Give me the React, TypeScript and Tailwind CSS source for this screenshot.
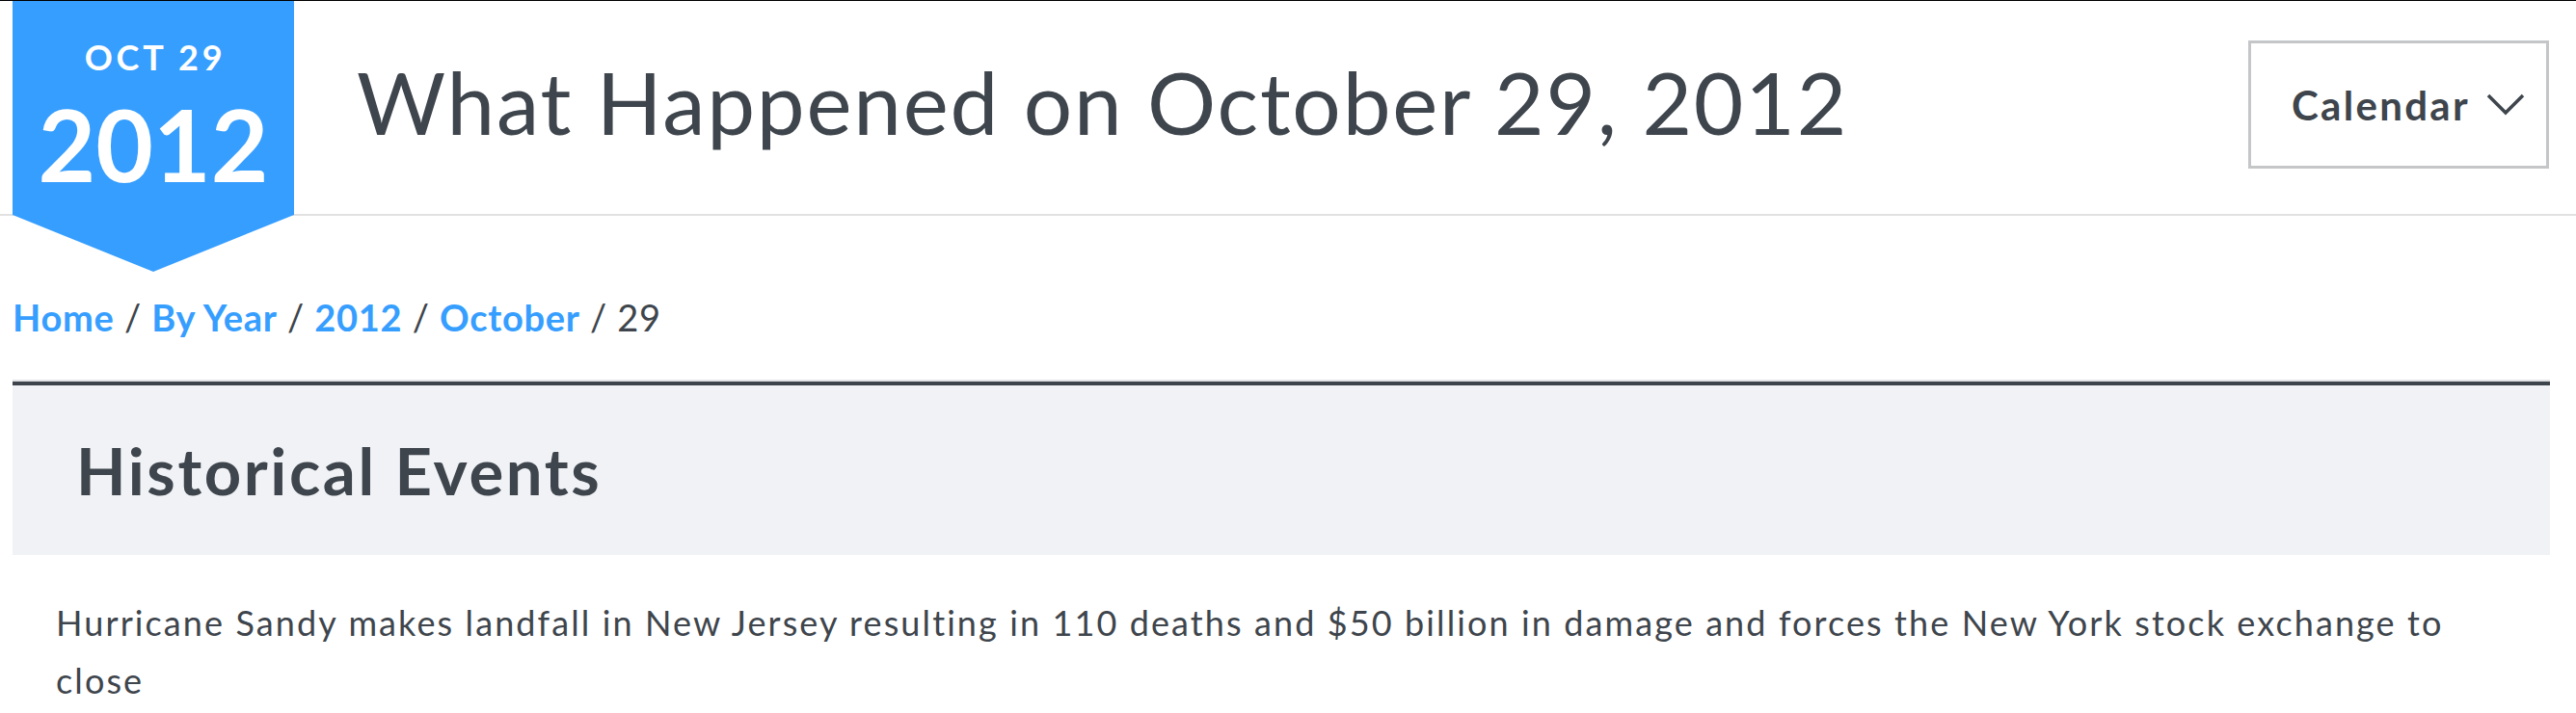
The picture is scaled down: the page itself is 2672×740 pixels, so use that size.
import React from "react";

const crumbs = [
  { label: "Home", href: "#" },
  { label: "By Year", href: "#" },
  { label: "2012", href: "#" },
  { label: "October", href: "#" },
];

const events = [
  "Hurricane Sandy makes landfall in New Jersey resulting in 110 deaths and $50 billion in damage and forces the New York stock exchange to close",
];

const DateBanner = () => (
  <div className="relative z-10 h-[281px] w-[292px] shrink-0 self-start bg-[#369eff] [clip-path:polygon(0_0,100%_0,100%_222px,50%_100%,0_222px)]">
    <div className="flex flex-col items-center pt-[40px] text-white">
      <span className="pl-[4px] text-[36px] font-bold leading-none tracking-[3.8px]">OCT 29</span>
      <span className="mt-[21px] text-[103px] font-bold leading-none">2012</span>
    </div>
  </div>
);

const CalendarButton = () => (
  <button className="mt-[41px] flex h-[133px] w-[312px] shrink-0 items-center self-start border-[3px] border-[#c5c6c8] bg-white pl-[42px] pr-[22px]">
    <span className="text-[42px] font-bold leading-none tracking-[2.3px] text-[#3e454c]">Calendar</span>
    <svg className="ml-auto" width="40" height="24" viewBox="0 0 40 24" fill="none">
      <polyline points="2,2 20,20 38,2" stroke="#3e454c" strokeWidth="3.5" />
    </svg>
  </button>
);

export default function App() {
  return (
    <div className="h-[740px] w-[2672px] overflow-hidden bg-white font-['Lato',sans-serif] text-[#3e454c]">
      <div className="h-px bg-black" />

      {/* шапка */}
      <header className="flex h-[223px] border-b-2 border-[#e1e1e1] pl-[13px] pr-[28px]">
        <DateBanner />
        <h1 className="ml-[65px] mt-[60px] self-start text-[89px] font-normal leading-none tracking-[1.8px]">
          What Happened on October 29, 2012
        </h1>
        <div className="flex-1" />
        <CalendarButton />
      </header>

      <div className="px-[13px] pr-[27px]">
        {/* хлебные крошки */}
        <nav className="mt-[86px] text-[38px] leading-none tracking-[0.7px]">
          {crumbs.map((c) => (
            <React.Fragment key={c.label}>
              <a href={c.href} className="font-bold text-[#369eff]">
                {c.label}
              </a>
              <span> / </span>
            </React.Fragment>
          ))}
          <span>29</span>
        </nav>

        <section className="mt-[46px] border-t-2 border-[#e0e2e5]">
          <div className="flex h-[180px] items-center border-t-4 border-[#3d444b] bg-[#f0f2f6] pl-[66px]">
            <h2 className="text-[67px] font-bold leading-none tracking-[2.6px]">Historical Events</h2>
          </div>
          <ul className="mt-[40px] pl-[45px] pr-[40px]">
            {events.map((e) => (
              <li key={e} className="text-[36px] leading-[60px] tracking-[2.1px]">
                {e}
              </li>
            ))}
          </ul>
        </section>
      </div>
    </div>
  );
}
